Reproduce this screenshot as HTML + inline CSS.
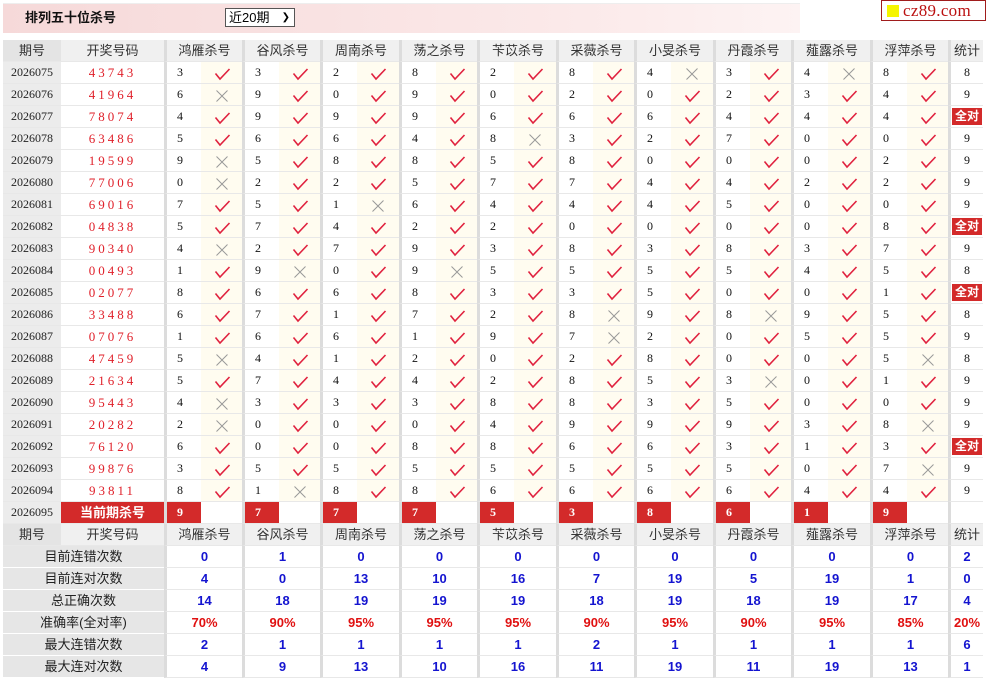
<!DOCTYPE html>
<html><head><meta charset="utf-8">
<style>
body{margin:0;background:#fff;width:987px;height:677px;overflow:hidden;position:relative;font-family:"Liberation Sans","Noto Sans CJK SC",sans-serif;}
.bar{position:absolute;left:3px;top:3px;width:797px;height:29px;background:linear-gradient(90deg,#f6d9d9,#fbe9e9 70%,#fdf3f3);border-top:1px solid #eee;}
.ttl{position:absolute;left:22px;top:6px;font-size:13px;font-weight:bold;color:#111;line-height:16px;}
.sel{position:absolute;left:225px;top:8px;width:70px;height:19px;box-sizing:border-box;border:1px solid #555;background:#fff;font-size:13px;line-height:17px;padding-left:3px;color:#000;}
.sel span{position:absolute;right:4px;top:0;font-size:10px;}
.logo{position:absolute;left:881px;top:0;width:105px;height:21px;box-sizing:border-box;border:1px solid #a01c1c;background:#fff;}
.logo i{position:absolute;left:5px;top:4px;width:12px;height:12px;background:#f5f500;}
.logo b{position:absolute;left:21px;top:0px;font:normal 17px "Liberation Serif",serif;color:#b11;line-height:19px;letter-spacing:0.3px;}
.tb{position:absolute;left:3px;top:40px;width:980px;}
.r{display:flex;height:22px;}
.r>div{box-sizing:border-box;height:22px;border-bottom:1px solid #e8e8e8;font-size:12px;line-height:21px;white-space:nowrap;}
.a{width:58px;background:#ececec;text-align:center;font-family:"Liberation Serif",serif;color:#222;}
.b{width:103px;text-align:center;color:#e0202a;font-family:"Liberation Serif",serif;letter-spacing:3px;font-size:13px!important;}
.n{width:37px;border-left:3px solid #dcdcdc;padding-left:10px;font-family:"Liberation Serif",serif;color:#111;}
.m{width:41px;background:#fffcf0;text-align:center;}
.m.w{width:42px;}
.t{width:35px;border-left:3px solid #dcdcdc;text-align:center;font-family:"Liberation Serif",serif;color:#111;}
.m svg{margin-top:5px;}
.qd{display:inline-block;width:30px;height:17px;background:#d32a2a;color:#fff;font-weight:bold;font-size:12px;line-height:17px;margin-top:2px;font-family:"Liberation Sans","Noto Sans CJK SC",sans-serif;}
.h>div{background:#f0f0f0;color:#333;font-size:13px;text-align:center;font-family:"Liberation Sans","Noto Sans CJK SC",sans-serif;letter-spacing:0;padding:0;}
.h .a{background:#e4e4e4;}
.h .g{width:78px;border-left:3px solid #dcdcdc;}
.h .g.w{width:79px;}
.rd{background:#d32a2a!important;color:#fff!important;font-weight:bold;}
.cur .b{font-family:"Liberation Sans","Noto Sans CJK SC",sans-serif;letter-spacing:0;}
.cur .m{background:#fff;}
.s>div{font-size:13px;text-align:center;}
.s .l{width:161px;background:#e6e6e6;border-bottom:1px solid #fff;color:#222;}
.s .g{width:78px;border-left:3px solid #dcdcdc;color:#1414d0;font-weight:bold;}
.s .g.w{width:79px;}
.s .t{color:#1414d0;font-weight:bold;font-family:"Liberation Sans",sans-serif;}
.s.p .g,.s.p .t{color:#e01010;}
</style></head><body>
<svg width="0" height="0" style="position:absolute"><defs>
<symbol id="y" viewBox="0 0 18 14"><path d="M2.5 6.5L7 12L16.5 2" fill="none" stroke="#e0223f" stroke-width="1.6"/></symbol>
<symbol id="x" viewBox="0 0 14 14"><path d="M1.5 1.5L12.5 12.5M12.5 1.5L1.5 12.5" fill="none" stroke="#999" stroke-width="1"/></symbol>
</defs></svg>
<div class="bar"><div class="ttl">排列五十位杀号</div></div>
<div class="sel">近20期<span>&#10095;</span></div>
<div class="logo"><i></i><b>cz89.com</b></div>
<div class="tb">
<div class="r h"><div class="a">期号</div><div class="b">开奖号码</div><div class="g">鸿雁杀号</div><div class="g">谷风杀号</div><div class="g w">周南杀号</div><div class="g">荡之杀号</div><div class="g w">苄苡杀号</div><div class="g">采薇杀号</div><div class="g w">小旻杀号</div><div class="g">丹霞杀号</div><div class="g w">薤露杀号</div><div class="g">浮萍杀号</div><div class="t">统计</div></div>

<div class="r"><div class="a">2026075</div><div class="b">43743</div><div class="n">3</div><div class="m"><svg width="18" height="14"><use href="#y"/></svg></div><div class="n">3</div><div class="m"><svg width="18" height="14"><use href="#y"/></svg></div><div class="n">2</div><div class="m w"><svg width="18" height="14"><use href="#y"/></svg></div><div class="n">8</div><div class="m"><svg width="18" height="14"><use href="#y"/></svg></div><div class="n">2</div><div class="m w"><svg width="18" height="14"><use href="#y"/></svg></div><div class="n">8</div><div class="m"><svg width="18" height="14"><use href="#y"/></svg></div><div class="n">4</div><div class="m w"><svg width="14" height="14"><use href="#x"/></svg></div><div class="n">3</div><div class="m"><svg width="18" height="14"><use href="#y"/></svg></div><div class="n">4</div><div class="m w"><svg width="14" height="14"><use href="#x"/></svg></div><div class="n">8</div><div class="m"><svg width="18" height="14"><use href="#y"/></svg></div><div class="t">8</div></div>

<div class="r"><div class="a">2026076</div><div class="b">41964</div><div class="n">6</div><div class="m"><svg width="14" height="14"><use href="#x"/></svg></div><div class="n">9</div><div class="m"><svg width="18" height="14"><use href="#y"/></svg></div><div class="n">0</div><div class="m w"><svg width="18" height="14"><use href="#y"/></svg></div><div class="n">9</div><div class="m"><svg width="18" height="14"><use href="#y"/></svg></div><div class="n">0</div><div class="m w"><svg width="18" height="14"><use href="#y"/></svg></div><div class="n">2</div><div class="m"><svg width="18" height="14"><use href="#y"/></svg></div><div class="n">0</div><div class="m w"><svg width="18" height="14"><use href="#y"/></svg></div><div class="n">2</div><div class="m"><svg width="18" height="14"><use href="#y"/></svg></div><div class="n">3</div><div class="m w"><svg width="18" height="14"><use href="#y"/></svg></div><div class="n">4</div><div class="m"><svg width="18" height="14"><use href="#y"/></svg></div><div class="t">9</div></div>

<div class="r"><div class="a">2026077</div><div class="b">78074</div><div class="n">4</div><div class="m"><svg width="18" height="14"><use href="#y"/></svg></div><div class="n">9</div><div class="m"><svg width="18" height="14"><use href="#y"/></svg></div><div class="n">9</div><div class="m w"><svg width="18" height="14"><use href="#y"/></svg></div><div class="n">9</div><div class="m"><svg width="18" height="14"><use href="#y"/></svg></div><div class="n">6</div><div class="m w"><svg width="18" height="14"><use href="#y"/></svg></div><div class="n">6</div><div class="m"><svg width="18" height="14"><use href="#y"/></svg></div><div class="n">6</div><div class="m w"><svg width="18" height="14"><use href="#y"/></svg></div><div class="n">4</div><div class="m"><svg width="18" height="14"><use href="#y"/></svg></div><div class="n">4</div><div class="m w"><svg width="18" height="14"><use href="#y"/></svg></div><div class="n">4</div><div class="m"><svg width="18" height="14"><use href="#y"/></svg></div><div class="t"><span class="qd">全对</span></div></div>

<div class="r"><div class="a">2026078</div><div class="b">63486</div><div class="n">5</div><div class="m"><svg width="18" height="14"><use href="#y"/></svg></div><div class="n">6</div><div class="m"><svg width="18" height="14"><use href="#y"/></svg></div><div class="n">6</div><div class="m w"><svg width="18" height="14"><use href="#y"/></svg></div><div class="n">4</div><div class="m"><svg width="18" height="14"><use href="#y"/></svg></div><div class="n">8</div><div class="m w"><svg width="14" height="14"><use href="#x"/></svg></div><div class="n">3</div><div class="m"><svg width="18" height="14"><use href="#y"/></svg></div><div class="n">2</div><div class="m w"><svg width="18" height="14"><use href="#y"/></svg></div><div class="n">7</div><div class="m"><svg width="18" height="14"><use href="#y"/></svg></div><div class="n">0</div><div class="m w"><svg width="18" height="14"><use href="#y"/></svg></div><div class="n">0</div><div class="m"><svg width="18" height="14"><use href="#y"/></svg></div><div class="t">9</div></div>

<div class="r"><div class="a">2026079</div><div class="b">19599</div><div class="n">9</div><div class="m"><svg width="14" height="14"><use href="#x"/></svg></div><div class="n">5</div><div class="m"><svg width="18" height="14"><use href="#y"/></svg></div><div class="n">8</div><div class="m w"><svg width="18" height="14"><use href="#y"/></svg></div><div class="n">8</div><div class="m"><svg width="18" height="14"><use href="#y"/></svg></div><div class="n">5</div><div class="m w"><svg width="18" height="14"><use href="#y"/></svg></div><div class="n">8</div><div class="m"><svg width="18" height="14"><use href="#y"/></svg></div><div class="n">0</div><div class="m w"><svg width="18" height="14"><use href="#y"/></svg></div><div class="n">0</div><div class="m"><svg width="18" height="14"><use href="#y"/></svg></div><div class="n">0</div><div class="m w"><svg width="18" height="14"><use href="#y"/></svg></div><div class="n">2</div><div class="m"><svg width="18" height="14"><use href="#y"/></svg></div><div class="t">9</div></div>

<div class="r"><div class="a">2026080</div><div class="b">77006</div><div class="n">0</div><div class="m"><svg width="14" height="14"><use href="#x"/></svg></div><div class="n">2</div><div class="m"><svg width="18" height="14"><use href="#y"/></svg></div><div class="n">2</div><div class="m w"><svg width="18" height="14"><use href="#y"/></svg></div><div class="n">5</div><div class="m"><svg width="18" height="14"><use href="#y"/></svg></div><div class="n">7</div><div class="m w"><svg width="18" height="14"><use href="#y"/></svg></div><div class="n">7</div><div class="m"><svg width="18" height="14"><use href="#y"/></svg></div><div class="n">4</div><div class="m w"><svg width="18" height="14"><use href="#y"/></svg></div><div class="n">4</div><div class="m"><svg width="18" height="14"><use href="#y"/></svg></div><div class="n">2</div><div class="m w"><svg width="18" height="14"><use href="#y"/></svg></div><div class="n">2</div><div class="m"><svg width="18" height="14"><use href="#y"/></svg></div><div class="t">9</div></div>

<div class="r"><div class="a">2026081</div><div class="b">69016</div><div class="n">7</div><div class="m"><svg width="18" height="14"><use href="#y"/></svg></div><div class="n">5</div><div class="m"><svg width="18" height="14"><use href="#y"/></svg></div><div class="n">1</div><div class="m w"><svg width="14" height="14"><use href="#x"/></svg></div><div class="n">6</div><div class="m"><svg width="18" height="14"><use href="#y"/></svg></div><div class="n">4</div><div class="m w"><svg width="18" height="14"><use href="#y"/></svg></div><div class="n">4</div><div class="m"><svg width="18" height="14"><use href="#y"/></svg></div><div class="n">4</div><div class="m w"><svg width="18" height="14"><use href="#y"/></svg></div><div class="n">5</div><div class="m"><svg width="18" height="14"><use href="#y"/></svg></div><div class="n">0</div><div class="m w"><svg width="18" height="14"><use href="#y"/></svg></div><div class="n">0</div><div class="m"><svg width="18" height="14"><use href="#y"/></svg></div><div class="t">9</div></div>

<div class="r"><div class="a">2026082</div><div class="b">04838</div><div class="n">5</div><div class="m"><svg width="18" height="14"><use href="#y"/></svg></div><div class="n">7</div><div class="m"><svg width="18" height="14"><use href="#y"/></svg></div><div class="n">4</div><div class="m w"><svg width="18" height="14"><use href="#y"/></svg></div><div class="n">2</div><div class="m"><svg width="18" height="14"><use href="#y"/></svg></div><div class="n">2</div><div class="m w"><svg width="18" height="14"><use href="#y"/></svg></div><div class="n">0</div><div class="m"><svg width="18" height="14"><use href="#y"/></svg></div><div class="n">0</div><div class="m w"><svg width="18" height="14"><use href="#y"/></svg></div><div class="n">0</div><div class="m"><svg width="18" height="14"><use href="#y"/></svg></div><div class="n">0</div><div class="m w"><svg width="18" height="14"><use href="#y"/></svg></div><div class="n">8</div><div class="m"><svg width="18" height="14"><use href="#y"/></svg></div><div class="t"><span class="qd">全对</span></div></div>

<div class="r"><div class="a">2026083</div><div class="b">90340</div><div class="n">4</div><div class="m"><svg width="14" height="14"><use href="#x"/></svg></div><div class="n">2</div><div class="m"><svg width="18" height="14"><use href="#y"/></svg></div><div class="n">7</div><div class="m w"><svg width="18" height="14"><use href="#y"/></svg></div><div class="n">9</div><div class="m"><svg width="18" height="14"><use href="#y"/></svg></div><div class="n">3</div><div class="m w"><svg width="18" height="14"><use href="#y"/></svg></div><div class="n">8</div><div class="m"><svg width="18" height="14"><use href="#y"/></svg></div><div class="n">3</div><div class="m w"><svg width="18" height="14"><use href="#y"/></svg></div><div class="n">8</div><div class="m"><svg width="18" height="14"><use href="#y"/></svg></div><div class="n">3</div><div class="m w"><svg width="18" height="14"><use href="#y"/></svg></div><div class="n">7</div><div class="m"><svg width="18" height="14"><use href="#y"/></svg></div><div class="t">9</div></div>

<div class="r"><div class="a">2026084</div><div class="b">00493</div><div class="n">1</div><div class="m"><svg width="18" height="14"><use href="#y"/></svg></div><div class="n">9</div><div class="m"><svg width="14" height="14"><use href="#x"/></svg></div><div class="n">0</div><div class="m w"><svg width="18" height="14"><use href="#y"/></svg></div><div class="n">9</div><div class="m"><svg width="14" height="14"><use href="#x"/></svg></div><div class="n">5</div><div class="m w"><svg width="18" height="14"><use href="#y"/></svg></div><div class="n">5</div><div class="m"><svg width="18" height="14"><use href="#y"/></svg></div><div class="n">5</div><div class="m w"><svg width="18" height="14"><use href="#y"/></svg></div><div class="n">5</div><div class="m"><svg width="18" height="14"><use href="#y"/></svg></div><div class="n">4</div><div class="m w"><svg width="18" height="14"><use href="#y"/></svg></div><div class="n">5</div><div class="m"><svg width="18" height="14"><use href="#y"/></svg></div><div class="t">8</div></div>

<div class="r"><div class="a">2026085</div><div class="b">02077</div><div class="n">8</div><div class="m"><svg width="18" height="14"><use href="#y"/></svg></div><div class="n">6</div><div class="m"><svg width="18" height="14"><use href="#y"/></svg></div><div class="n">6</div><div class="m w"><svg width="18" height="14"><use href="#y"/></svg></div><div class="n">8</div><div class="m"><svg width="18" height="14"><use href="#y"/></svg></div><div class="n">3</div><div class="m w"><svg width="18" height="14"><use href="#y"/></svg></div><div class="n">3</div><div class="m"><svg width="18" height="14"><use href="#y"/></svg></div><div class="n">5</div><div class="m w"><svg width="18" height="14"><use href="#y"/></svg></div><div class="n">0</div><div class="m"><svg width="18" height="14"><use href="#y"/></svg></div><div class="n">0</div><div class="m w"><svg width="18" height="14"><use href="#y"/></svg></div><div class="n">1</div><div class="m"><svg width="18" height="14"><use href="#y"/></svg></div><div class="t"><span class="qd">全对</span></div></div>

<div class="r"><div class="a">2026086</div><div class="b">33488</div><div class="n">6</div><div class="m"><svg width="18" height="14"><use href="#y"/></svg></div><div class="n">7</div><div class="m"><svg width="18" height="14"><use href="#y"/></svg></div><div class="n">1</div><div class="m w"><svg width="18" height="14"><use href="#y"/></svg></div><div class="n">7</div><div class="m"><svg width="18" height="14"><use href="#y"/></svg></div><div class="n">2</div><div class="m w"><svg width="18" height="14"><use href="#y"/></svg></div><div class="n">8</div><div class="m"><svg width="14" height="14"><use href="#x"/></svg></div><div class="n">9</div><div class="m w"><svg width="18" height="14"><use href="#y"/></svg></div><div class="n">8</div><div class="m"><svg width="14" height="14"><use href="#x"/></svg></div><div class="n">9</div><div class="m w"><svg width="18" height="14"><use href="#y"/></svg></div><div class="n">5</div><div class="m"><svg width="18" height="14"><use href="#y"/></svg></div><div class="t">8</div></div>

<div class="r"><div class="a">2026087</div><div class="b">07076</div><div class="n">1</div><div class="m"><svg width="18" height="14"><use href="#y"/></svg></div><div class="n">6</div><div class="m"><svg width="18" height="14"><use href="#y"/></svg></div><div class="n">6</div><div class="m w"><svg width="18" height="14"><use href="#y"/></svg></div><div class="n">1</div><div class="m"><svg width="18" height="14"><use href="#y"/></svg></div><div class="n">9</div><div class="m w"><svg width="18" height="14"><use href="#y"/></svg></div><div class="n">7</div><div class="m"><svg width="14" height="14"><use href="#x"/></svg></div><div class="n">2</div><div class="m w"><svg width="18" height="14"><use href="#y"/></svg></div><div class="n">0</div><div class="m"><svg width="18" height="14"><use href="#y"/></svg></div><div class="n">5</div><div class="m w"><svg width="18" height="14"><use href="#y"/></svg></div><div class="n">5</div><div class="m"><svg width="18" height="14"><use href="#y"/></svg></div><div class="t">9</div></div>

<div class="r"><div class="a">2026088</div><div class="b">47459</div><div class="n">5</div><div class="m"><svg width="14" height="14"><use href="#x"/></svg></div><div class="n">4</div><div class="m"><svg width="18" height="14"><use href="#y"/></svg></div><div class="n">1</div><div class="m w"><svg width="18" height="14"><use href="#y"/></svg></div><div class="n">2</div><div class="m"><svg width="18" height="14"><use href="#y"/></svg></div><div class="n">0</div><div class="m w"><svg width="18" height="14"><use href="#y"/></svg></div><div class="n">2</div><div class="m"><svg width="18" height="14"><use href="#y"/></svg></div><div class="n">8</div><div class="m w"><svg width="18" height="14"><use href="#y"/></svg></div><div class="n">0</div><div class="m"><svg width="18" height="14"><use href="#y"/></svg></div><div class="n">0</div><div class="m w"><svg width="18" height="14"><use href="#y"/></svg></div><div class="n">5</div><div class="m"><svg width="14" height="14"><use href="#x"/></svg></div><div class="t">8</div></div>

<div class="r"><div class="a">2026089</div><div class="b">21634</div><div class="n">5</div><div class="m"><svg width="18" height="14"><use href="#y"/></svg></div><div class="n">7</div><div class="m"><svg width="18" height="14"><use href="#y"/></svg></div><div class="n">4</div><div class="m w"><svg width="18" height="14"><use href="#y"/></svg></div><div class="n">4</div><div class="m"><svg width="18" height="14"><use href="#y"/></svg></div><div class="n">2</div><div class="m w"><svg width="18" height="14"><use href="#y"/></svg></div><div class="n">8</div><div class="m"><svg width="18" height="14"><use href="#y"/></svg></div><div class="n">5</div><div class="m w"><svg width="18" height="14"><use href="#y"/></svg></div><div class="n">3</div><div class="m"><svg width="14" height="14"><use href="#x"/></svg></div><div class="n">0</div><div class="m w"><svg width="18" height="14"><use href="#y"/></svg></div><div class="n">1</div><div class="m"><svg width="18" height="14"><use href="#y"/></svg></div><div class="t">9</div></div>

<div class="r"><div class="a">2026090</div><div class="b">95443</div><div class="n">4</div><div class="m"><svg width="14" height="14"><use href="#x"/></svg></div><div class="n">3</div><div class="m"><svg width="18" height="14"><use href="#y"/></svg></div><div class="n">3</div><div class="m w"><svg width="18" height="14"><use href="#y"/></svg></div><div class="n">3</div><div class="m"><svg width="18" height="14"><use href="#y"/></svg></div><div class="n">8</div><div class="m w"><svg width="18" height="14"><use href="#y"/></svg></div><div class="n">8</div><div class="m"><svg width="18" height="14"><use href="#y"/></svg></div><div class="n">3</div><div class="m w"><svg width="18" height="14"><use href="#y"/></svg></div><div class="n">5</div><div class="m"><svg width="18" height="14"><use href="#y"/></svg></div><div class="n">0</div><div class="m w"><svg width="18" height="14"><use href="#y"/></svg></div><div class="n">0</div><div class="m"><svg width="18" height="14"><use href="#y"/></svg></div><div class="t">9</div></div>

<div class="r"><div class="a">2026091</div><div class="b">20282</div><div class="n">2</div><div class="m"><svg width="14" height="14"><use href="#x"/></svg></div><div class="n">0</div><div class="m"><svg width="18" height="14"><use href="#y"/></svg></div><div class="n">0</div><div class="m w"><svg width="18" height="14"><use href="#y"/></svg></div><div class="n">0</div><div class="m"><svg width="18" height="14"><use href="#y"/></svg></div><div class="n">4</div><div class="m w"><svg width="18" height="14"><use href="#y"/></svg></div><div class="n">9</div><div class="m"><svg width="18" height="14"><use href="#y"/></svg></div><div class="n">9</div><div class="m w"><svg width="18" height="14"><use href="#y"/></svg></div><div class="n">9</div><div class="m"><svg width="18" height="14"><use href="#y"/></svg></div><div class="n">3</div><div class="m w"><svg width="18" height="14"><use href="#y"/></svg></div><div class="n">8</div><div class="m"><svg width="14" height="14"><use href="#x"/></svg></div><div class="t">9</div></div>

<div class="r"><div class="a">2026092</div><div class="b">76120</div><div class="n">6</div><div class="m"><svg width="18" height="14"><use href="#y"/></svg></div><div class="n">0</div><div class="m"><svg width="18" height="14"><use href="#y"/></svg></div><div class="n">0</div><div class="m w"><svg width="18" height="14"><use href="#y"/></svg></div><div class="n">8</div><div class="m"><svg width="18" height="14"><use href="#y"/></svg></div><div class="n">8</div><div class="m w"><svg width="18" height="14"><use href="#y"/></svg></div><div class="n">6</div><div class="m"><svg width="18" height="14"><use href="#y"/></svg></div><div class="n">6</div><div class="m w"><svg width="18" height="14"><use href="#y"/></svg></div><div class="n">3</div><div class="m"><svg width="18" height="14"><use href="#y"/></svg></div><div class="n">1</div><div class="m w"><svg width="18" height="14"><use href="#y"/></svg></div><div class="n">3</div><div class="m"><svg width="18" height="14"><use href="#y"/></svg></div><div class="t"><span class="qd">全对</span></div></div>

<div class="r"><div class="a">2026093</div><div class="b">99876</div><div class="n">3</div><div class="m"><svg width="18" height="14"><use href="#y"/></svg></div><div class="n">5</div><div class="m"><svg width="18" height="14"><use href="#y"/></svg></div><div class="n">5</div><div class="m w"><svg width="18" height="14"><use href="#y"/></svg></div><div class="n">5</div><div class="m"><svg width="18" height="14"><use href="#y"/></svg></div><div class="n">5</div><div class="m w"><svg width="18" height="14"><use href="#y"/></svg></div><div class="n">5</div><div class="m"><svg width="18" height="14"><use href="#y"/></svg></div><div class="n">5</div><div class="m w"><svg width="18" height="14"><use href="#y"/></svg></div><div class="n">5</div><div class="m"><svg width="18" height="14"><use href="#y"/></svg></div><div class="n">0</div><div class="m w"><svg width="18" height="14"><use href="#y"/></svg></div><div class="n">7</div><div class="m"><svg width="14" height="14"><use href="#x"/></svg></div><div class="t">9</div></div>

<div class="r"><div class="a">2026094</div><div class="b">93811</div><div class="n">8</div><div class="m"><svg width="18" height="14"><use href="#y"/></svg></div><div class="n">1</div><div class="m"><svg width="14" height="14"><use href="#x"/></svg></div><div class="n">8</div><div class="m w"><svg width="18" height="14"><use href="#y"/></svg></div><div class="n">8</div><div class="m"><svg width="18" height="14"><use href="#y"/></svg></div><div class="n">6</div><div class="m w"><svg width="18" height="14"><use href="#y"/></svg></div><div class="n">6</div><div class="m"><svg width="18" height="14"><use href="#y"/></svg></div><div class="n">6</div><div class="m w"><svg width="18" height="14"><use href="#y"/></svg></div><div class="n">6</div><div class="m"><svg width="18" height="14"><use href="#y"/></svg></div><div class="n">4</div><div class="m w"><svg width="18" height="14"><use href="#y"/></svg></div><div class="n">4</div><div class="m"><svg width="18" height="14"><use href="#y"/></svg></div><div class="t">9</div></div>

<div class="r cur"><div class="a">2026095</div><div class="b rd">当前期杀号</div><div class="n rd">9</div><div class="m"></div><div class="n rd">7</div><div class="m"></div><div class="n rd">7</div><div class="m w"></div><div class="n rd">7</div><div class="m"></div><div class="n rd">5</div><div class="m w"></div><div class="n rd">3</div><div class="m"></div><div class="n rd">8</div><div class="m w"></div><div class="n rd">6</div><div class="m"></div><div class="n rd">1</div><div class="m w"></div><div class="n rd">9</div><div class="m"></div><div class="t"></div></div>

<div class="r h"><div class="a">期号</div><div class="b">开奖号码</div><div class="g">鸿雁杀号</div><div class="g">谷风杀号</div><div class="g w">周南杀号</div><div class="g">荡之杀号</div><div class="g w">苄苡杀号</div><div class="g">采薇杀号</div><div class="g w">小旻杀号</div><div class="g">丹霞杀号</div><div class="g w">薤露杀号</div><div class="g">浮萍杀号</div><div class="t">统计</div></div>

<div class="r s"><div class="l">目前连错次数</div><div class="g">0</div><div class="g">1</div><div class="g w">0</div><div class="g">0</div><div class="g w">0</div><div class="g">0</div><div class="g w">0</div><div class="g">0</div><div class="g w">0</div><div class="g">0</div><div class="t">2</div></div>
<div class="r s"><div class="l">目前连对次数</div><div class="g">4</div><div class="g">0</div><div class="g w">13</div><div class="g">10</div><div class="g w">16</div><div class="g">7</div><div class="g w">19</div><div class="g">5</div><div class="g w">19</div><div class="g">1</div><div class="t">0</div></div>
<div class="r s"><div class="l">总正确次数</div><div class="g">14</div><div class="g">18</div><div class="g w">19</div><div class="g">19</div><div class="g w">19</div><div class="g">18</div><div class="g w">19</div><div class="g">18</div><div class="g w">19</div><div class="g">17</div><div class="t">4</div></div>
<div class="r s p"><div class="l">准确率(全对率)</div><div class="g">70%</div><div class="g">90%</div><div class="g w">95%</div><div class="g">95%</div><div class="g w">95%</div><div class="g">90%</div><div class="g w">95%</div><div class="g">90%</div><div class="g w">95%</div><div class="g">85%</div><div class="t">20%</div></div>
<div class="r s"><div class="l">最大连错次数</div><div class="g">2</div><div class="g">1</div><div class="g w">1</div><div class="g">1</div><div class="g w">1</div><div class="g">2</div><div class="g w">1</div><div class="g">1</div><div class="g w">1</div><div class="g">1</div><div class="t">6</div></div>
<div class="r s"><div class="l">最大连对次数</div><div class="g">4</div><div class="g">9</div><div class="g w">13</div><div class="g">10</div><div class="g w">16</div><div class="g">11</div><div class="g w">19</div><div class="g">11</div><div class="g w">19</div><div class="g">13</div><div class="t">1</div></div>
</div>
</body></html>
